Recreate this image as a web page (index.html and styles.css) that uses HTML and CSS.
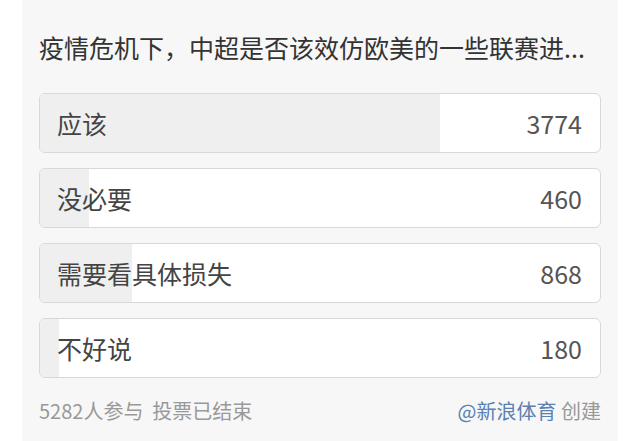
FILE: index.html
```html
<html>
	<head>
		<meta charset="utf-8">
		<link rel="stylesheet" href="styles.css">
	</head>
	<body>
		<div class="panel">
			<div class="title">疫情危机下，中超是否该效仿欧美的一些联赛进...</div>
			<div class="options">
				<div class="option">
					<div class="bar" style="width: 71.45%"></div>
					<span class="label">应该</span><span class="count">3774</span>
				</div>
				<div class="option">
					<div class="bar" style="width: 8.71%"></div>
					<span class="label">没必要</span><span class="count">460</span>
				</div>
				<div class="option">
					<div class="bar" style="width: 16.43%"></div>
					<span class="label">需要看具体损失</span><span class="count">868</span>
				</div>
				<div class="option">
					<div class="bar" style="width: 3.41%"></div>
					<span class="label">不好说</span><span class="count">180</span>
				</div>
			</div>
			<div class="footer">
				<span class="stat">5282人参与&nbsp;&nbsp;投票已结束</span>
				<span class="maker"><span class="author">@新浪体育</span> 创建</span>
			</div>
		</div>
	</body>
</html>
```
FILE: styles.css
```css
html, body{
	margin:0;
	background:#fff;
}
body{
	font-family:"Noto Sans CJK SC", "Noto Sans", sans-serif;
	color:#333;
}
.panel{
	margin:0 22px;
	height:441px;
	box-sizing:border-box;
	background:#f7f7f7;
	padding:30px 17px 0;
}
.title{
	font-size:25px;
	line-height:34px;
	white-space:nowrap;
	margin-bottom:29px;
}
.options{
	display:flex;
	flex-direction:column;
	gap:15px;
}
.option{
	position:relative;
	height:60px;
	box-sizing:border-box;
	border:1px solid #d8d8d8;
	border-radius:6px;
	background:#fff;
	overflow:hidden;
	display:flex;
	align-items:center;
	justify-content:space-between;
	padding:0 18px 0 17px;
	font-size:25px;
	color:#444;
}
.bar{
	position:absolute;
	left:0;
	top:0;
	bottom:0;
	background:#efefef;
}
.label, .count{
	position:relative;
}
.count{
	font-size:25px;
	color:#555;
}
.footer{
	display:flex;
	justify-content:space-between;
	align-items:center;
	margin-top:20px;
	height:24px;
	font-size:20px;
	color:#999;
}
.author{
	color:#5b80b2;
}
```
